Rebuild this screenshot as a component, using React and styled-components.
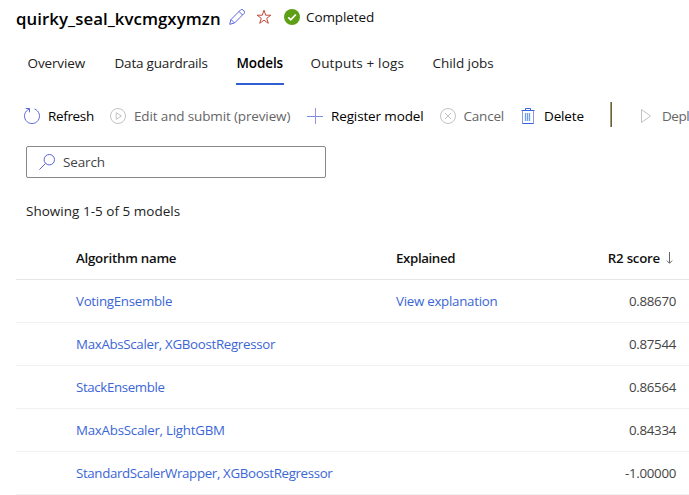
import React from 'react';
import styled, { createGlobalStyle } from 'styled-components';

const Global = createGlobalStyle`
  * { box-sizing: border-box; }
  body {
    margin: 0;
    background: #fff;
    color: #111;
    font: 13.5px/20px "Open Sans", "Noto Sans", sans-serif;
    overflow: hidden;
  }
`;

const Page = styled.main`
  width: 689px;
  height: 495px;
  overflow: hidden;
  background: #fff;
`;

const Label = styled.span`
  letter-spacing: ${(p) => p.$track || 0}px;
  white-space: nowrap;
`;

const TitleBar = styled.header`
  display: flex;
  align-items: center;
  height: 34px;
  padding-left: 16px;
`;

const Title = styled.h1`
  flex: none;
  width: 213px;
  margin: 0;
  padding-top: 3px;
  font-size: 16.8px;
  line-height: 24px;
  font-weight: 600;
  letter-spacing: 0.06px;
  color: #000;
`;

const Status = styled.div`
  display: flex;
  align-items: center;
  gap: 6px;
  margin-left: 11px;
`;

const Icon = styled.svg`
  flex: none;
  display: block;
  width: ${(p) => p.$size || 16}px;
  height: ${(p) => p.$size || 16}px;
  fill: none;
  stroke-width: 1;
`;

const StarIcon = styled(Icon)`
  margin-left: 11px;
  margin-right: 1px;
`;

const TabList = styled.nav`
  display: flex;
  height: 51px;
  padding: 15px 0 0 27px;
`;

const Tab = styled.a`
  flex: none;
  width: ${(p) => p.$width}px;
  height: 36px;
  margin-right: ${(p) => p.$gap}px;
  padding: 4px 0 0 0.5px;
  border-bottom: 2px solid ${(p) => (p.$active ? '#2f5fd0' : 'transparent')};
  font-weight: ${(p) => (p.$active ? 600 : 400)};
  color: ${(p) => (p.$active ? '#000' : '#222')};
`;

const Toolbar = styled.div`
  display: flex;
  align-items: center;
  height: 61px;
  padding: 0 0 0 24px;
`;

const Command = styled.div`
  flex: none;
  display: flex;
  align-items: center;
  gap: 8px;
  width: ${(p) => p.$width}px;
  color: ${(p) => (p.$disabled ? '#666' : '#000')};
`;

const Separator = styled.div`
  flex: none;
  width: 2px;
  height: 25px;
  margin: 0 26px 2px 0;
  border-left: 1px solid #d98d2b;
  background: #28728c;
`;

const SearchBox = styled.div`
  display: flex;
  align-items: center;
  gap: 8px;
  width: 300px;
  height: 32px;
  margin-left: 26px;
  padding-left: 12px;
  border: 1px solid #888;
  border-radius: 2px;
  color: #444;
`;

const Summary = styled.p`
  margin: 0;
  padding: 23px 0 0 26px;
  height: 59px;
  color: #222;
`;

const Table = styled.div`
  margin-left: 16px;
  font-size: 13.3px;
`;

const Row = styled.div`
  display: grid;
  grid-template-columns: 320px 160px 120px 1fr;
  align-items: center;
  height: 43px;
  padding-left: 60px;
  border-bottom: 1px solid #f1f1f1;
`;

const HeaderRow = styled(Row)`
  border-bottom-color: #e6e6e6;
  font-weight: 600;
  color: #111;
`;

const Link = styled.a`
  color: #3b66d6;
`;

const Score = styled.div`
  color: #444;
  text-align: right;
`;

const SortHeader = styled.div`
  display: flex;
  align-items: center;
  justify-content: flex-end;
  gap: 3px;
  padding-right: 1px;
`;

const RefreshIcon = () => (
  <Icon viewBox="0 0 16 16" stroke="#5b6ae0">
    <path d="M5.5 1A7.5 7.5 0 1 0 10.5 1M1.7.5H5.5V4.3" />
  </Icon>
);
const PlayCircleIcon = () => (
  <Icon viewBox="0 0 16 16" stroke="#c2c2c2">
    <circle cx="8" cy="8" r="7.5" />
    <path d="M6.2 4.6 11.4 8 6.2 11.4Z" />
  </Icon>
);
const PlusIcon = () => (
  <Icon viewBox="0 0 16 16">
    <path d="M0 8.5H16" stroke="#7b8be2" />
    <path d="M8.5 0V16" stroke="#a28ce2" />
  </Icon>
);
const CancelIcon = () => (
  <Icon viewBox="0 0 16 16" stroke="#c2c2c2">
    <circle cx="8" cy="8" r="7.5" />
    <path d="m5 5 6 6M11 5l-6 6" />
  </Icon>
);
const DeleteIcon = () => (
  <Icon viewBox="0 0 16 16">
    <path d="M2.5 3V15.5H13.5V3" stroke="#8d98ea" />
    <path d="M1.5 2.5H14.5M2.5 15.5H13.5M5.5 2V.5H10.5V2" stroke="#3564dc" />
    <path d="M5.5 5V13M7.5 5V13M9.5 5V13" stroke="#6fa0e8" strokeWidth="1.3" />
  </Icon>
);
const PlayIcon = () => (
  <Icon viewBox="0 0 16 16" stroke="#c2c2c2">
    <path d="M3.5 1.5V14.5L12.5 8Z" />
  </Icon>
);
const SearchIcon = () => (
  <Icon viewBox="0 0 16 16" stroke="#5b62de">
    <circle cx="10.3" cy="5.7" r="5.2" />
    <path d="M6.5 9.5.4 15.6" />
  </Icon>
);
const SortIcon = () => (
  <Icon $size={12} viewBox="0 0 12 12" stroke="#666">
    <path d="M6.5 0V11M3.8 8.6l2.7 2.7 2.7-2.7" />
  </Icon>
);

const tabs = [
  { text: 'Overview', width: 58, gap: 29, track: -0.12 },
  { text: 'Data guardrails', width: 95, gap: 27, track: -0.2 },
  { text: 'Models', width: 48, gap: 26, track: -0.12, active: true },
  { text: 'Outputs + logs', width: 95, gap: 27, track: 0.15 },
  { text: 'Child jobs', width: 63, gap: 0, track: -0.05 },
];

const commands = [
  { text: 'Refresh', icon: RefreshIcon, width: 86, track: -0.35 },
  { text: 'Edit and submit (preview)', icon: PlayCircleIcon, width: 197, track: -0.14, disabled: true },
  { text: 'Register model', icon: PlusIcon, width: 132.5, track: -0.13 },
  { text: 'Cancel', icon: CancelIcon, width: 80.5, track: -0.2, disabled: true },
  { text: 'Delete', icon: DeleteIcon, width: 90, track: -0.15 },
];

const models = [
  { name: 'VotingEnsemble', track: -0.28, explained: true, score: '0.88670' },
  { name: 'MaxAbsScaler, XGBoostRegressor', track: -0.31, score: '0.87544' },
  { name: 'StackEnsemble', track: -0.37, score: '0.86564' },
  { name: 'MaxAbsScaler, LightGBM', track: -0.24, score: '0.84334' },
  { name: 'StandardScalerWrapper, XGBoostRegressor', track: -0.35, score: '-1.00000' },
];

export default function App() {
  return (
    <Page>
      <Global />
      <TitleBar>
        <Title>quirky_seal_kvcmgxymzn</Title>
        <Icon viewBox="0 0 16 16" stroke="#5867dd">
          <path d="M.7 15.3 2 10.5 11.6.9a1.7 1.7 0 0 1 2.4 0l1.1 1.1a1.7 1.7 0 0 1 0 2.4L5.5 14ZM10 2.5 13.5 6M2 10.5 5.5 14" />
        </Icon>
        <StarIcon viewBox="0 0 16 16" stroke="#c2483a">
          <path d="m8 1.2 1.7 5h5.2l-4.2 3.1 1.6 5L8 11.2l-4.3 3.1 1.6-5L1.1 6.2h5.2Z" />
        </StarIcon>
        <Status>
          <Icon viewBox="0 0 16 16">
            <circle cx="8" cy="8" r="8" fill="#5e9f16" />
            <path d="m4.3 8.3 2.5 2.5 5-5.3" stroke="#fff" strokeWidth="1.8" />
          </Icon>
          <Label $track={-0.1}>Completed</Label>
        </Status>
      </TitleBar>
      <TabList>
        {tabs.map((t) => (
          <Tab key={t.text} $width={t.width} $gap={t.gap} $active={t.active}>
            <Label $track={t.track}>{t.text}</Label>
          </Tab>
        ))}
      </TabList>
      <Toolbar>
        {commands.map(({ icon: Glyph, ...c }) => (
          <Command key={c.text} $width={c.width} $disabled={c.disabled}>
            <Glyph />
            <Label $track={c.track}>{c.text}</Label>
          </Command>
        ))}
        <Separator />
        <Command $width={51} $disabled>
          <PlayIcon />
          <Label $track={-0.5}>Depl</Label>
        </Command>
      </Toolbar>
      <SearchBox>
        <SearchIcon />
        <Label $track={-0.15}>Search</Label>
      </SearchBox>
      <Summary>
        <Label $track={0.02}>Showing 1-5 of 5 models</Label>
      </Summary>
      <Table>
        <HeaderRow>
          <Label $track={-0.25}>Algorithm name</Label>
          <Label $track={-0.38}>Explained</Label>
          <SortHeader>
            <Label $track={-0.25}>R2 score</Label>
            <SortIcon />
          </SortHeader>
        </HeaderRow>
        {models.map((m) => (
          <Row key={m.name}>
            <Link><Label $track={m.track}>{m.name}</Label></Link>
            <Link>{m.explained && <Label $track={-0.26}>View explanation</Label>}</Link>
            <Score><Label $track={-0.3}>{m.score}</Label></Score>
          </Row>
        ))}
      </Table>
    </Page>
  );
}
